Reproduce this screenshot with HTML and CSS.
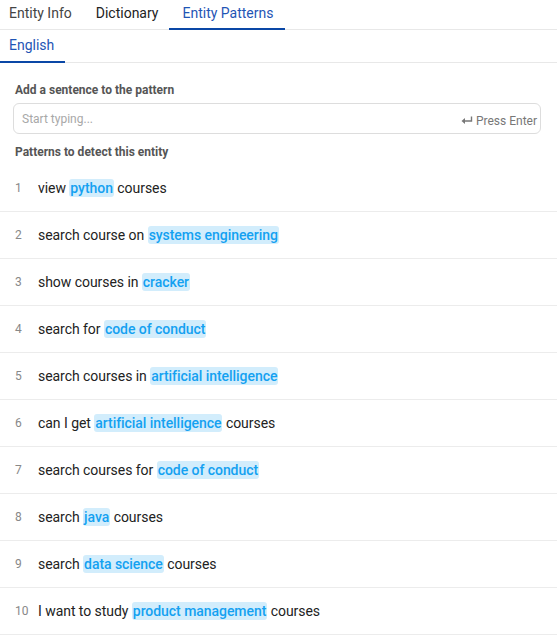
FILE: index.html
```html
<!DOCTYPE html>
<html>
<head>
<meta charset="utf-8">
<link rel="stylesheet" href="styles.css">
</head>
<body>
<div class="tabs">
  <div class="tab tab-first">Entity Info</div>
  <div class="tab tab-dark">Dictionary</div>
  <div class="tab active">Entity Patterns</div>
</div>
<div class="subtabs">
  <div class="subtab active">English</div>
</div>
<div class="content">
  <div class="label">Add a sentence to the pattern</div>
  <div class="input">
    <span class="placeholder">Start typing...</span>
    <span class="hint"><svg class="enter" width="12" height="9" viewBox="0 0 12 9"><path d="M10.5 0.5 V5 H2.5" fill="none" stroke="#777" stroke-width="1.4"/><path d="M0.5 5 L4 2 V8 Z" fill="#777"/></svg>Press Enter</span>
  </div>
  <div class="label label2">Patterns to detect this entity</div>
</div>
<div class="list">
  <div class="row"><span class="num">1</span><span class="text">view <span class="chip">python</span> courses</span></div>
  <div class="row"><span class="num">2</span><span class="text">search course on <span class="chip">systems engineering</span></span></div>
  <div class="row"><span class="num">3</span><span class="text">show courses in <span class="chip">cracker</span></span></div>
  <div class="row"><span class="num">4</span><span class="text">search for <span class="chip">code of conduct</span></span></div>
  <div class="row"><span class="num">5</span><span class="text">search courses in <span class="chip">artificial intelligence</span></span></div>
  <div class="row"><span class="num">6</span><span class="text">can I get <span class="chip">artificial intelligence</span> courses</span></div>
  <div class="row"><span class="num">7</span><span class="text">search courses for <span class="chip">code of conduct</span></span></div>
  <div class="row"><span class="num">8</span><span class="text">search <span class="chip">java</span> courses</span></div>
  <div class="row"><span class="num">9</span><span class="text">search <span class="chip">data science</span> courses</span></div>
  <div class="row"><span class="num">10</span><span class="text">I want to study <span class="chip">product management</span> courses</span></div>
</div>
</body>
</html>
```
FILE: styles.css
```css
* { box-sizing: border-box; }
html, body { margin: 0; padding: 0; background: #fff; }
body { font-family: Roboto, "Liberation Sans", sans-serif; color: #222; overflow: hidden; }

.tabs {
  display: flex;
  height: 30px;
  border-bottom: 1px solid #e8e8e8;
}
.tab {
  font-size: 14px;
  line-height: 27px;
  padding: 0 12px 0 12px;
  color: #222;
  border-bottom: 2px solid transparent;
  height: 30px;
}
.tab-first { padding-left: 9px; color: #444; }
.tab.active {
  color: #1f55b5;
  border-bottom-color: #0a47a6;
  padding-left: 13px;
  padding-right: 11px;
  margin-left: -1px;
}

.subtabs {
  display: flex;
  height: 33px;
  border-bottom: 1px solid #e8e8e8;
}
.subtab {
  font-size: 14px;
  line-height: 31px;
  padding: 0 11px 0 9px;
  height: 33px;
  color: #1f55b5;
  border-bottom: 2px solid #0a47a6;
}

.content { padding: 20px 16px 0 13px; }
.label {
  font-size: 12px;
  font-weight: 700;
  color: #555;
  line-height: 14px;
  padding-left: 2px;
}
.input {
  margin-top: 6px;
  height: 31px;
  border: 1px solid #ddd;
  border-radius: 6px;
  display: flex;
  align-items: center;
  justify-content: space-between;
  padding: 0 3px 0 8px;
}
.placeholder { font-size: 12px; color: #a8a8a8; }
.hint { font-size: 12px; color: #777; display: flex; align-items: center; margin-top: 4px; }
.enter { margin-right: 3px; }
.label2 { margin-top: 11px; }

.list { margin-top: 6px; }
.row {
  height: 47px;
  border-bottom: 1px solid #ececec;
  display: flex;
  align-items: center;
  padding-left: 15px;
  padding-bottom: 1px;
}
.num { font-size: 12px; color: #888; width: 23px; flex-shrink: 0; }
.text { font-size: 14px; color: #222; letter-spacing: -0.05px; }
.chip {
  background: #d2edfc;
  color: #14a1f1;
  font-weight: 500;
  border-radius: 3px;
  padding: 1px 1px;
}
```
